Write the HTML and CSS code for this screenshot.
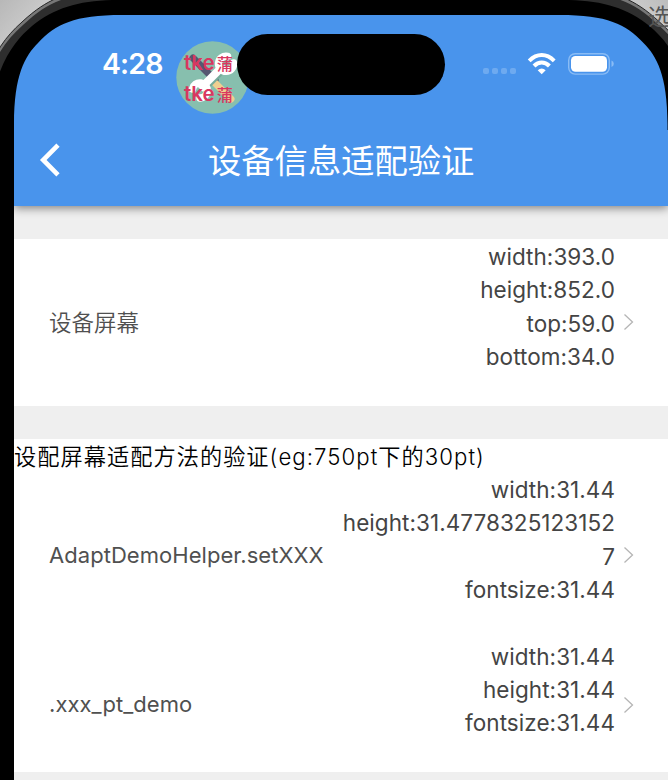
FILE: index.html
```html
<!DOCTYPE html>
<html lang="zh-CN">
<head>
<meta charset="utf-8">
<title>设备信息适配验证</title>
<link rel="stylesheet" href="styles.css">
</head>
<body>
<div class="device">
  <main class="screen">
    <header class="header">
      <div class="status">
        <span class="time">4:28</span>
        <div class="badge">
          <svg class="badge-art" width="73" height="73" viewBox="0 0 73 73">
            <circle cx="36.5" cy="36.5" r="36.2" fill="#87bfae"/>
            <path d="M17 17L39 39" stroke="#555871" stroke-width="7" stroke-linecap="round"/>
            <path d="M38 41L55 58" stroke="#efcf91" stroke-width="7" stroke-linecap="round"/>
            <path d="M26 49L49 26" stroke="#75ac9b" stroke-width="8"/>
            <path d="M24 48L48 24" stroke="#fff" stroke-width="8"/>
            <path d="M51.500 15.500A7.500 7.500 0 1 0 57.500 22" fill="none" stroke="#fff" stroke-width="7.500" stroke-linecap="round"/>
            <path d="M16.500 48A7.500 7.500 0 1 1 24 57" fill="none" stroke="#fff" stroke-width="7.500" stroke-linecap="round"/>
          </svg>
          <div class="badge-text"><span>tke<b>蒲</b></span><span>tke<b>蒲</b></span></div>
        </div>
        <div class="island"></div>
        <svg class="signals" width="132" height="24" viewBox="482 52 132 24">
          <g fill="#6eaaf0"><rect x="483" y="68" width="6" height="6" rx="2"/><rect x="492" y="68" width="6" height="6" rx="2"/><rect x="501" y="68" width="6" height="6" rx="2"/><rect x="510" y="68" width="6" height="6" rx="2"/></g>
          <g fill="none" stroke="#fff" stroke-width="4"><path d="M529.2 60.8Q535 55 541.7 55T554.2 60.8"/><path d="M534 66Q537.5 62.4 541.7 62.4T549.4 66"/></g>
          <path d="M537.7 70.3Q541.7 66.5 545.7 70.3L541.7 74.2Z" fill="#fff"/>
          <rect x="568.7" y="53.7" width="40.6" height="20.4" rx="6.5" fill="none" stroke="#8abcf5" stroke-width="1.4"/>
          <rect x="571" y="56" width="36" height="15.7" rx="4.5" fill="#fff"/>
          <path d="M611.5 60.5Q613.8 61.4 613.8 63.7T611.5 67Z" fill="#8abcf5"/>
        </svg>
      </div>
      <div class="nav">
        <svg class="back" width="22" height="34" viewBox="0 0 22 34"><path d="M19 2.200L4.200 17L19 31.800" fill="none" stroke="#fff" stroke-width="4.600"/></svg>
        <h1 class="title">设备信息适配验证</h1>
      </div>
    </header>
    <section class="card card-first">
      <div class="row row-tall">
        <span class="label label-cn">设备屏幕</span>
        <div class="values"><span>width:393.0</span><span>height:852.0</span><span>top:59.0</span><span>bottom:34.0</span></div>
        <svg class="chevron" width="12" height="18" viewBox="0 0 12 18"><path d="M1.500 1.500L9.500 9L1.500 16.500" fill="none" stroke="#b5b5b5" stroke-width="1.300"/></svg>
      </div>
    </section>
    <section class="card">
      <h2 class="caption">设配屏幕适配方法的验证(eg:750pt下的30pt)</h2>
      <div class="row row-tall">
        <span class="label">AdaptDemoHelper.setXXX</span>
        <div class="values"><span>width:31.44</span><span>height:31.4778325123152</span><span>7</span><span>fontsize:31.44</span></div>
        <svg class="chevron" width="12" height="18" viewBox="0 0 12 18"><path d="M1.500 1.500L9.500 9L1.500 16.500" fill="none" stroke="#b5b5b5" stroke-width="1.300"/></svg>
      </div>
      <div class="row">
        <span class="label">.xxx_pt_demo</span>
        <div class="values"><span>width:31.44</span><span>height:31.44</span><span>fontsize:31.44</span></div>
        <svg class="chevron" width="12" height="18" viewBox="0 0 12 18"><path d="M1.500 1.500L9.500 9L1.500 16.500" fill="none" stroke="#b5b5b5" stroke-width="1.300"/></svg>
      </div>
    </section>
  </main>
  <svg class="frame" width="668" height="130" viewBox="0 0 668 130">
    <defs>
      <linearGradient id="desk" x1="0" y1="0" x2="1" y2="1"><stop offset="0" stop-color="#b2b2b2"/><stop offset=".45" stop-color="#c9c9c9"/><stop offset="1" stop-color="#a0a0a0"/></linearGradient>
      <g id="corner">
        <path d="M-20 0V130H14V124C14 75 25 56 38 43C56 24 74 15 122 15V0Z" fill="#000"/>
        <path d="M-14 0V125C-4 65 13 42 32 26C54 8 78 1 112 0Z" fill="#2e2e2e"/>
        <path d="M-14 0V84C-6 57 7 39 23 25C37 12 47 5 61 0Z" fill="#777"/>
        <path d="M-14 0V78C-7 54 6 36 22 22C36 9 46 3 57 -2Z" fill="url(#desk)"/>
        <path d="M-14 78C-7 54 6 36 22 22C36 9 46 3 57 -2" fill="none" stroke="#252525" stroke-width="1"/>
      </g>
    </defs>
    <use href="#corner"/>
    <use href="#corner" transform="matrix(-1 0 0 1 681.5 0)"/>
  </svg>
  <span class="desktop-text">选</span>
</div>
</body>
</html>
```
FILE: styles.css
```css
* { box-sizing: border-box; }
body { margin: 0; background: #000; font-family: Inter, "Noto Sans CJK SC", sans-serif; }
.device { position: relative; width: 668px; height: 780px; overflow: hidden; padding: 15px 0 0 14px; background: #000; }
.screen { height: 765px; background: #efefef; overflow: hidden; }
.header { position: relative; height: 191px; background: #4994ec; box-shadow: 0 2px 9px rgba(0, 0, 0, .48); color: #fff; }
.status { display: flex; align-items: flex-start; height: 98px; padding-left: 88px; }
.time { width: 74px; padding-top: 31px; font-size: 28.500px; line-height: 36px; font-weight: 600; letter-spacing: -.9px; white-space: nowrap; }
.badge { position: relative; flex: none; width: 73px; height: 73px; margin-top: 26px; }
.badge-art { display: block; }
.badge-text { position: absolute; left: 8px; top: 7px; display: flex; flex-direction: column; color: #d93760; font-size: 20.500px; line-height: 30px; font-weight: 600; white-space: nowrap; }
.badge-text b { margin-left: 2px; font-size: 16px; font-weight: 500; }
.island { position: relative; flex: none; width: 208px; height: 61px; margin: 19px 0 0 -12px; border-radius: 31px; background: #000; }
.signals { flex: none; margin: 37px 0 0 37px; }
.nav { display: flex; align-items: center; height: 93px; padding-left: 25px; }
.back { flex: none; }
.title { position: relative; top: -1px; margin: 0 0 0 147px; font: 400 33.300px/50px "Noto Sans CJK SC", sans-serif; white-space: nowrap; }
.card { margin-top: 33px; background: #fff; }
.card-first { height: 167px; }
.row { display: flex; align-items: center; height: 133px; padding: 0 33px 0 35px; }
.row-tall { height: 166.500px; }
.label { color: #505050; font-size: 22px; line-height: 33.300px; font-weight: 400; letter-spacing: .05px; white-space: nowrap; }
.label-cn { font-size: 22.500px; font-weight: 350; letter-spacing: 0; }
.values { flex: 1; display: flex; flex-direction: column; align-items: flex-end; align-self: flex-start; margin-right: -1px; padding-top: 1px; color: #444; font-size: 22.500px; line-height: 33.300px; font-weight: 400; letter-spacing: .05px; white-space: nowrap; }
.chevron { flex: none; margin-left: 9px; }
.caption { margin: 0; padding-top: 1px; height: 33px; color: #000; font-size: 22.200px; line-height: 33px; font-weight: 350; letter-spacing: 1.050px; white-space: nowrap; }
.frame { position: absolute; left: 0; top: 0; }
.desktop-text { position: absolute; left: 648px; top: 0; color: #555; font-size: 23px; line-height: 34px; white-space: nowrap; }
```
